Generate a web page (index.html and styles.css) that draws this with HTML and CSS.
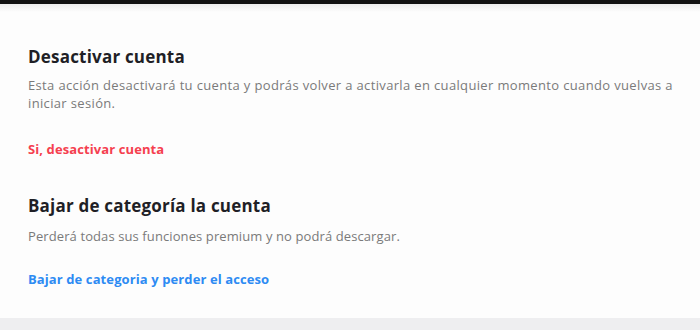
FILE: index.html
```html
<!DOCTYPE html>
<html lang="es">
<head>
    <meta charset="UTF-8">
    <meta name="viewport" content="width=device-width, initial-scale=1.0">
    <title>Cuenta</title>
    <link rel="stylesheet" href="styles.css">
</head>
<body>
    <div class="topbar"></div>
    <div class="panel">
        <section class="block">
            <h2>Desactivar cuenta</h2>
            <p>Esta acción desactivará tu cuenta y podrás volver a activarla en cualquier momento cuando vuelvas a iniciar sesión.</p>
            <a href="#" class="action danger">Si, desactivar cuenta</a>
        </section>
        <section class="block second">
            <h2>Bajar de categoría la cuenta</h2>
            <p>Perderá todas sus funciones premium y no podrá descargar.</p>
            <a href="#" class="action info">Bajar de categoria y perder el acceso</a>
        </section>
    </div>
    <div class="footer"></div>
</body>
</html>
```

FILE: styles.css
```css
body {
    margin: 0;
    font-family: "Open Sans", Lato, sans-serif;
    background-color: #fdfdfd;
    height: 330px;
    display: flex;
    flex-direction: column;
}
.topbar {
    height: 4px;
    background-color: #111;
    box-shadow: 0 2px 6px rgba(0, 0, 0, 0.12);
}
.panel {
    flex: 1;
    padding: 42px 16px 0 28px;
    background: linear-gradient(#ececec, #fdfdfd 8px);
}
.block h2 {
    margin: 0;
    font-size: 17px;
    line-height: 22px;
    font-weight: 700;
    color: #1f1f26;
    letter-spacing: 0.2px;
}
.block p {
    margin: 8px 0 0;
    font-size: 13px;
    line-height: 18px;
    color: #7a7a7a;
    letter-spacing: 0.35px;
}
.action {
    display: inline-block;
    font-size: 13px;
    font-weight: 700;
    text-decoration: none;
    margin-top: 28px;
    letter-spacing: 0.1px;
}
.danger {
    color: #f5404f;
}
.info {
    color: #2d8bf3;
}
.second {
    margin-top: 36px;
}
.second p {
    margin-top: 10px;
    letter-spacing: 0.1px;
}
.second .action {
    margin-top: 25px;
}
.footer {
    height: 12px;
    background-color: #eeeef0;
}
```
